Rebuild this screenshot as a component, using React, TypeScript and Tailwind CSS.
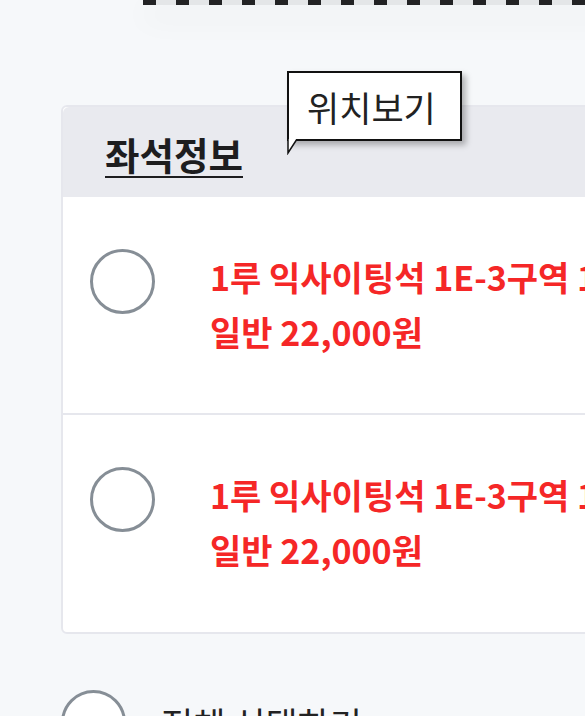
const font = { fontFamily: '"Noto Sans CJK KR", "Noto Sans", sans-serif' };

const seats = [
  { name: "1루 익사이팅석 1E-3구역 1열 5번", price: "일반 22,000원" },
  { name: "1루 익사이팅석 1E-3구역 1열 6번", price: "일반 22,000원" },
];

const Radio = () => (
  <span className="block h-[65px] w-[65px] shrink-0 rounded-full border-[3px] border-[#868e96] bg-white" />
);

export default function App() {
  return (
    <div
      className="relative h-[716px] w-[585px] overflow-hidden bg-[#f6f8fa] text-[#222]"
      style={font}
    >
      {/* ticket edge */}
      <div className="ml-[143px] h-[5px] w-[600px] bg-[#e4e6e8] bg-[repeating-linear-gradient(90deg,#232325_0_13px,transparent_13px_33px)] shadow-[0_12px_30px_rgba(0,0,0,0.11)]" />

      <div className="relative ml-[61px] mt-[100px] w-[620px] rounded-md border-2 border-[#e6e7ed] bg-white">
        <div className="flex h-[90px] items-center rounded-t-md bg-[#e9eaef] pl-[42px] pt-[4px]">
          <h2 className="text-[37.5px] font-bold leading-none text-[#1d1d1f] underline decoration-2 underline-offset-[6px]">
            좌석정보
          </h2>
        </div>

        {/* tooltip */}
        <div className="absolute left-[224px] top-[-36px] flex h-[70px] w-[175px] items-center border-2 border-[#111] bg-white pl-[18px] shadow-[4px_4px_6px_rgba(0,0,0,0.28)]">
          <span className="text-[35px] leading-none font-normal text-[#222]">위치보기</span>
          <svg
            className="absolute left-[-2px] top-full"
            width="12"
            height="16"
            viewBox="0 0 12 16"
          >
            <polygon points="1,0 1,14 10,0" fill="#fff" />
            <polyline points="1,0 1,14 10,0" fill="none" stroke="#111" strokeWidth="1.5" />
          </svg>
        </div>

        {seats.map((s, i) => (
          <label
            key={i}
            className={
              "flex items-start gap-[55px] pt-[52px] pl-[27px] " +
              (i > 0 ? "border-t-2 border-[#e6e7ed] h-[219px]" : "h-[216px]")
            }
          >
            <Radio />
            <div className="whitespace-nowrap text-[34px] font-bold leading-[55px] text-[#f52727]">
              <p>{s.name}</p>
              <p>{s.price}</p>
            </div>
          </label>
        ))}
      </div>

      <div className="ml-[61px] mt-[56px] flex items-center gap-[35px]">
        <Radio />
        <span className="text-[35px] leading-none">전체 선택하기</span>
      </div>
    </div>
  );
}
